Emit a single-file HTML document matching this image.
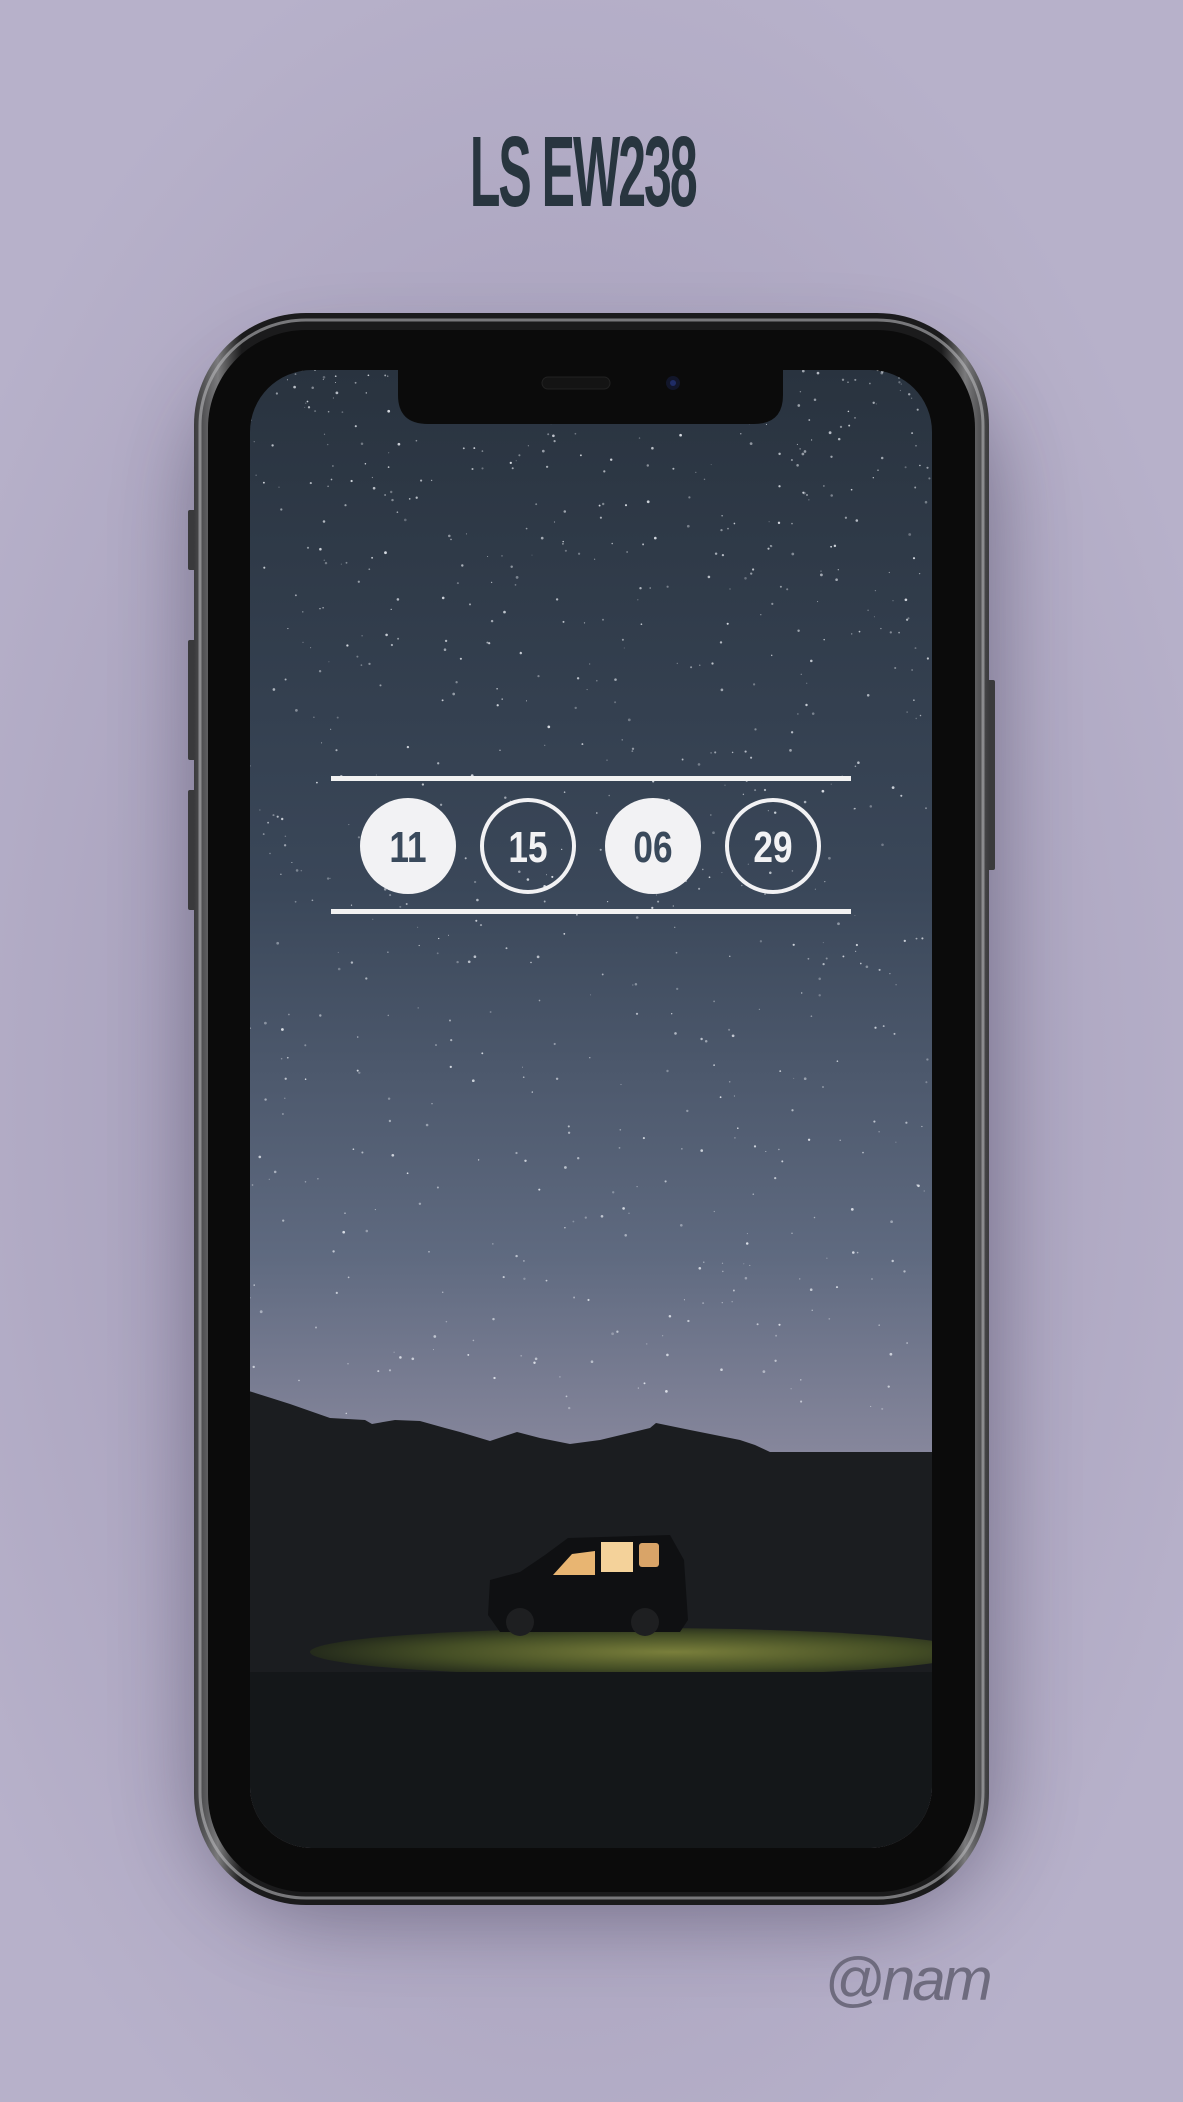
<!DOCTYPE html>
<html><head><meta charset="utf-8">
<style>
html,body{margin:0;padding:0;}
body{width:1183px;height:2102px;position:relative;overflow:hidden;
background:radial-gradient(ellipse 700px 1200px at 560px 1100px,#8f88a0 0%,#aba4bf 55%,#b7b1ca 100%);
font-family:"Liberation Sans",sans-serif;}
.title{position:absolute;left:0;width:1165px;top:114px;text-align:center;}
.title span{display:inline-block;font-family:"Liberation Sans Narrow","Liberation Sans",sans-serif;font-weight:bold;font-size:100px;line-height:116px;color:#28353f;letter-spacing:-4px;transform:scaleX(0.5);}
.sig{position:absolute;left:824px;top:1945px;font-family:"Liberation Sans",sans-serif;font-style:italic;font-size:60px;color:#6e6b7e;letter-spacing:-3px;}
.shadow{position:absolute;left:215px;top:360px;width:760px;height:1520px;border-radius:120px;box-shadow:0 20px 80px 20px rgba(40,35,60,0.4);}
</style></head><body>
<div class="title"><span>LS EW238</span></div>
<div class="shadow"></div>
<svg width="1183" height="2102" style="position:absolute;left:0;top:0">
<defs>
<linearGradient id="sky" x1="0" y1="0" x2="0" y2="1">
<stop offset="0" stop-color="#29333f"/>
<stop offset="0.35" stop-color="#3a4759"/>
<stop offset="0.6" stop-color="#5f6a80"/>
<stop offset="0.8" stop-color="#9a95aa"/>
<stop offset="0.95" stop-color="#cbbcc6"/>
</linearGradient>
<linearGradient id="frame" x1="0" y1="0" x2="1" y2="0">
<stop offset="0" stop-color="#3a3a3c"/><stop offset="0.03" stop-color="#7a7a7c"/><stop offset="0.06" stop-color="#1b1b1c"/>
<stop offset="0.94" stop-color="#1b1b1c"/><stop offset="0.97" stop-color="#7a7a7c"/><stop offset="1" stop-color="#3a3a3c"/>
</linearGradient>
<radialGradient id="grass" cx="0.55" cy="0.5" r="0.6">
<stop offset="0" stop-color="#8a9040"/><stop offset="0.6" stop-color="#4b5626"/><stop offset="1" stop-color="#1c2218"/>
</radialGradient>
<clipPath id="scr"><rect x="250" y="370" width="682" height="1478" rx="62"/></clipPath>
</defs>
<rect x="188" y="510" width="8" height="60" rx="2" fill="#3a3a3c"/>
<rect x="188" y="640" width="8" height="120" rx="2" fill="#3a3a3c"/>
<rect x="188" y="790" width="8" height="120" rx="2" fill="#3a3a3c"/>
<rect x="987" y="680" width="8" height="190" rx="2" fill="#3a3a3c"/>
<rect x="194" y="313" width="795" height="1592" rx="112" fill="url(#frame)"/>
<rect x="200" y="320" width="783" height="1578" rx="106" fill="none" stroke="#b8b8ba" stroke-width="3" opacity="0.6"/>
<rect x="208" y="330" width="767" height="1562" rx="98" fill="#0b0b0b"/>
<g clip-path="url(#scr)">
<rect x="250" y="370" width="682" height="1478" fill="url(#sky)"/>
<g fill="#e8ecf2" id="stars"></g>
<path d="M249 1391 L290 1404 L330 1418 L365 1420 L372 1424 L395 1420 L420 1421 L445 1428 L460 1432 L490 1441 L517 1432 L540 1438 L570 1444 L600 1440 L625 1434 L650 1428 L656 1423 L690 1430 L740 1440 L755 1445 L770 1452 L932 1452 L932 1848 L249 1848 Z" fill="#1b1d20"/>
<ellipse cx="640" cy="1652" rx="330" ry="24" fill="url(#grass)" opacity="0.85"/>
<rect x="249" y="1672" width="683" height="176" fill="#141719"/>
<path d="M490 1580 L520 1572 L545 1555 L568 1538 L670 1535 L684 1560 L688 1620 L680 1632 L500 1632 L488 1615 Z" fill="#0f1012"/>
<circle cx="520" cy="1622" r="14" fill="#1e1f21"/>
<circle cx="645" cy="1622" r="14" fill="#1e1f21"/>
<path d="M553 1575 L572 1554 L595 1551 L595 1575 Z" fill="#e8b572"/>
<rect x="601" y="1542" width="32" height="30" fill="#f4d29a"/>
<rect x="639" y="1543" width="20" height="24" rx="3" fill="#d9a468"/>
</g>
<path d="M398 370 L783 370 L783 395 Q783 424 754 424 L428 424 Q398 424 398 395 Z" fill="#0b0b0b"/>
<rect x="542" y="377" width="68" height="12" rx="6" fill="#141414" stroke="#222" stroke-width="1"/>
<circle cx="673" cy="383" r="7" fill="#12162a"/>
<circle cx="673" cy="383" r="3" fill="#1f2c66"/>
<rect x="331" y="776" width="520" height="5" fill="#f2f2f2"/>
<rect x="331" y="909" width="520" height="5" fill="#f2f2f2"/>
<circle cx="408" cy="846" r="48" fill="#f2f2f4"/>
<circle cx="528" cy="846" r="46" fill="none" stroke="#f2f2f4" stroke-width="4"/>
<circle cx="653" cy="846" r="48" fill="#f2f2f4"/>
<circle cx="773" cy="846" r="46" fill="none" stroke="#f2f2f4" stroke-width="4"/>
<g font-family="Liberation Sans Narrow, Liberation Sans, sans-serif" font-weight="bold" font-size="44" text-anchor="middle">
<text x="408" y="862" fill="#3a4a5c" transform="translate(408 0) scale(0.8 1) translate(-408 0)">11</text>
<text x="528" y="862" fill="#f2f2f4" transform="translate(528 0) scale(0.8 1) translate(-528 0)">15</text>
<text x="653" y="862" fill="#3a4a5c" transform="translate(653 0) scale(0.8 1) translate(-653 0)">06</text>
<text x="773" y="862" fill="#f2f2f4" transform="translate(773 0) scale(0.8 1) translate(-773 0)">29</text>
</g>
</svg>
<div class="sig">@nam</div>
<script>
var g=document.getElementById('stars');var s=7;function r(){s=(s*16807)%2147483647;return s/2147483647;}
var h='';for(var i=0;i<800;i++){var x=250+r()*682,y=370+Math.pow(r(),1.5)*1050;h+='<circle cx="'+x.toFixed(1)+'" cy="'+y.toFixed(1)+'" r="'+(0.5+r()*0.9).toFixed(2)+'" opacity="'+(0.3+r()*0.6).toFixed(2)+'"/>';}
g.innerHTML=h;
</script>
</body></html>
